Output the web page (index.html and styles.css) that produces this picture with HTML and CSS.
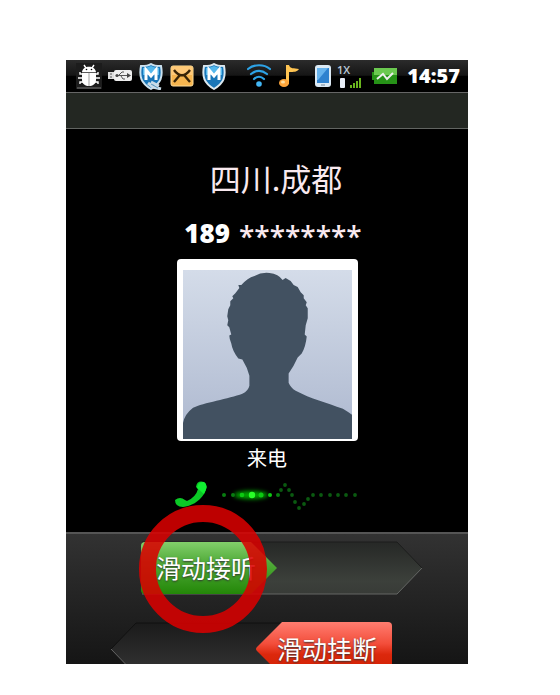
FILE: index.html
```html
<!DOCTYPE html>
<html lang="zh-CN">
<head>
<meta charset="utf-8">
<meta name="viewport" content="width=device-width, initial-scale=1">
<title>来电</title>
<link rel="stylesheet" href="styles.css">
</head>
<body>
<main class="phone">
  <header class="status">
    <svg class="icon" width="26" height="26" viewBox="0 0 26 26" aria-hidden="true">
      <path d="M0 0h26v26H0z" fill="#1c1c1c"/><path d="M1 25h24" stroke="#777"/>
      <g fill="none" stroke="#fff" stroke-width="1.4"><path d="M8 2l2 3M18 2l-2 3M7 11H4V9M7 15H2M7 19H4v2M19 11h3V9M19 15h5M19 19h3v2"/></g>
      <path d="M6 9c1-7 13-7 14 0zM6 10h14v7c0 8-14 8-14 0z" fill="#fff"/>
      <path d="M6 9.500h14M13 10v13" stroke="#777" stroke-width=".7"/><circle cx="10.500" cy="6.500" r=".8"/><circle cx="15.500" cy="6.500" r=".8"/>
    </svg>
    <svg class="icon usb" width="24" height="12" viewBox="0 0 24 12" aria-hidden="true">
      <rect y="2" width="7" height="7" fill="#ddd"/><rect x="6" width="18" height="11" rx="2" fill="#eee"/>
      <path d="M2 4h2M2 7h2M8 5.500h12M11 5l3-3h2M13 6l2 3h2" stroke="#555" fill="none"/><circle cx="9" cy="5.500" r="1.600" fill="#444"/><path d="M19 3l4 2.500-4 2.500z" fill="#444"/>
    </svg>
    <svg class="icon shield" width="24" height="27" viewBox="0 0 24 27" aria-hidden="true">
      <path d="M12 1c3 2 7 2 10 2 2 11 0 17-10 23C2 20 0 14 2 3c3 0 7 0 10-2z" fill="#1976b8" stroke="#cde2ef" stroke-width="2"/>
      <path d="M12 3c3 1 5 2 8 2v7H4V5c3 0 5-1 8-2z" fill="#55b8ed"/>
      <path d="M7 17V7l5 6 5-6v10" fill="none" stroke="#fff" stroke-width="3"/>
      <path d="M9 20l5 4 8 2M12 19l8 4" stroke="#c9dce8" stroke-width="3"/><path d="M12 21l7 4" stroke="#5d9ac1"/>
    </svg>
    <svg class="icon mail" width="24" height="22" viewBox="0 0 24 22" aria-hidden="true">
      <rect x="1" y="1" width="22" height="20" rx="2" fill="#f6b54f" stroke="#ffdd9b"/><path d="M2 2h20v8H2z" fill="#ffc978"/>
      <path d="M4 5c5 7 11 7 16 0M4 17l6-7M20 17l-6-7" fill="none" stroke="#382407" stroke-width="2.400"/>
    </svg>
    <svg class="icon shield second" width="24" height="27" viewBox="0 0 24 27" aria-hidden="true">
      <path d="M12 1c3 2 7 2 10 2 2 11 0 17-10 23C2 20 0 14 2 3c3 0 7 0 10-2z" fill="#1976b8" stroke="#dce8ef" stroke-width="2"/>
      <path d="M12 3c3 1 5 2 8 2v7H4V5c3 0 5-1 8-2z" fill="#55b8ed"/>
      <path d="M7 17V7l5 6 5-6v10" fill="none" stroke="#fff" stroke-width="3"/>
    </svg>
    <svg class="icon wifi" width="24" height="24" viewBox="0 0 24 24" aria-hidden="true">
      <g fill="none" stroke="#2da3e6" stroke-width="2.200" stroke-linecap="round"><path d="M1 5c6-5 16-5 22 0M4 10c5-4 11-4 16 0M7 15c3-3 7-3 10 0"/></g><circle cx="12" cy="20" r="2.800" fill="#42b6f5"/>
    </svg>
    <svg class="icon note" width="22" height="24" viewBox="0 0 22 24" aria-hidden="true">
      <path d="M8 1h3c1 4 5 3 10 4-2 3-5 3-10 3v12H8z" fill="#ffc553"/><ellipse cx="6" cy="19" rx="5" ry="4" fill="#ffa63b"/><ellipse cx="5" cy="18" rx="2" ry="1.500" fill="#ffe0a0"/>
    </svg>
    <svg class="icon handset" width="18" height="24" viewBox="0 0 18 24" aria-hidden="true">
      <rect x="1" y="1" width="16" height="22" rx="3" fill="#dceaf5"/><path d="M3 4h12v15H3z" fill="#2f82cf"/><path d="M3 4h11L4 16H3z" fill="#67b3ed"/><path d="M7 21h4" stroke="#789"/>
    </svg>
    <div class="network"><span>1X</span>
      <svg width="24" height="12" viewBox="0 0 24 12" aria-hidden="true"><rect x="3" y="1" width="5" height="10" rx="1" fill="#e8edf7"/><path d="M14 11V8M17 11V6M20 11V4M23 11V1" stroke="#69b51e" stroke-width="2"/></svg>
    </div>
    <svg class="icon battery" width="27" height="18" viewBox="0 0 27 18" aria-hidden="true">
      <path d="M3 1h23v16H3v-4H1V5h2z" fill="#269217"/><path d="M3 1h23v7H3z" fill="#6bc950"/><path d="M6 12l6-5 4 5 6-6" fill="none" stroke="#eee" stroke-width="2"/>
    </svg>
    <time>14:57</time>
  </header>
  <div class="titlebar"></div>
  <section class="caller">
    <h1>四川.成都</h1>
    <p class="number"><strong>189</strong><span>********</span></p>
    <div class="photo">
      <svg viewBox="0 0 168 168" role="img" aria-label="联系人头像">
        <defs><linearGradient id="sky" x2="0" y2="1"><stop stop-color="#d4dce9"/><stop offset="1" stop-color="#adb8cf"/></linearGradient></defs>
        <path d="M0 0h168v168H0z" fill="url(#sky)"/>
        <path d="M0 152Q2 143 10 137C20 132 46 128 59 123Q65 120 66 115V105Q64 97 59 89L55 88Q49 80 48 73 46 68 46 65L48 64 46 57 44 55 45 50 44 46 45 39 47 35 47 31 50 28 49 26 52 23 56 18 55 15 58 15Q64 8 71 6 78 2 86 3 95 4 99 10L102 8 107 11 110 15 114 17 117 22 120 25 120 28 123 32 122 35 124 38 124 48 122 55 121 64 123 66Q122 76 118 83L114 87Q110 96 105 103V112Q107 117 112 120C127 128 143 132 159 138Q164 141 168 144V168H0z" fill="#425161"/>
      </svg>
    </div>
    <p class="state">来电</p>
    <svg class="pulse" width="188" height="30" viewBox="0 0 188 30" aria-hidden="true">
      <defs><filter id="glow" x="-1" y="-1" width="3" height="3"><feGaussianBlur stdDeviation="2"/></filter></defs>
      <path d="M2 20q5-4 10 0l2 1q9-4 11-12l-2-2q1-7 8-5 5 3 0 12c-5 8-13 12-21 13Q2 27 2 20z" fill="#0bc926"/>
      <path d="M24 8q1-7 7-6 5 3 0 12z" fill="#11ef32"/>
      <ellipse cx="78" cy="15" rx="17" ry="4" fill="#0a0" filter="url(#glow)"/>
      <g fill="#087d10"><circle cx="51" cy="15" r="2"/><circle cx="60" cy="15" r="2"/><circle cx="105" cy="15" r="2"/></g>
      <g fill="#0cca12"><circle cx="69" cy="15" r="2.300"/><circle cx="79" cy="15" r="3.200" fill="#28ff28"/><circle cx="88" cy="15" r="2.500"/><circle cx="97" cy="15" r="2"/></g>
      <g fill="#0a5a10"><circle cx="108" cy="10" r="1.900"/><circle cx="112" cy="5" r="1.900"/><circle cx="116" cy="10" r="1.900"/><circle cx="119" cy="15" r="1.900"/><circle cx="122" cy="22" r="1.900"/><circle cx="126" cy="28" r="1.900"/><circle cx="131" cy="24" r="1.900"/><circle cx="135" cy="19" r="1.900"/><circle cx="140" cy="15" r="1.900"/><circle cx="148" cy="15" r="1.900"/><circle cx="157" cy="15" r="1.900"/><circle cx="165" cy="15" r="1.900"/><circle cx="173" cy="15" r="1.900"/><circle cx="182" cy="15" r="1.900"/></g>
    </svg>
  </section>
  <section class="actions">
    <div class="slider answer">
      <svg class="track" viewBox="0 0 282 54" aria-hidden="true">
        <defs><linearGradient id="trackUp" x2="0" y2="1"><stop stop-color="#262826"/><stop offset=".75" stop-color="#3c403b"/><stop offset="1" stop-color="#383b37"/></linearGradient></defs>
        <path d="M1 1h255l25 26-25 26H1z" fill="url(#trackUp)"/><path d="M1 53h255l25-26" fill="none" stroke="#646664"/><path d="M1 1h255l25 26" fill="none" stroke="#1c1d1c"/>
      </svg>
      <button type="button">
        <svg viewBox="0 0 136 54" aria-hidden="true"><defs><linearGradient id="green" x2="0" y2="1"><stop stop-color="#82cf6b"/><stop offset=".4" stop-color="#51ab39"/><stop offset="1" stop-color="#238708"/></linearGradient></defs><path d="M4 1h106l26 26-26 26H4q-4 0-4-4V5q0-4 4-4z" fill="url(#green)"/></svg>
        <span>滑动接听</span>
      </button>
      <svg class="ring" width="130" height="130" viewBox="0 0 130 130" aria-hidden="true"><circle cx="65" cy="65" r="55.500" fill="none" stroke="#d90000" stroke-opacity=".87" stroke-width="17"/></svg>
    </div>
    <div class="slider decline">
      <svg class="track" viewBox="0 0 282 54" aria-hidden="true">
        <defs><linearGradient id="trackDown" x2="0" y2="1"><stop stop-color="#1b1b1b"/><stop offset="1" stop-color="#353535"/></linearGradient></defs>
        <path d="M281 1H26L1 27l25 26h255z" fill="url(#trackDown)"/><path d="M1 27l25 26h255" fill="none" stroke="#666"/><path d="M281 1H26L1 27" fill="none" stroke="#101010"/>
      </svg>
      <button type="button">
        <svg viewBox="0 0 136 54" aria-hidden="true"><defs><linearGradient id="red" x2="0" y2="1"><stop stop-color="#ff7d70"/><stop offset=".4" stop-color="#f34e3b"/><stop offset=".6" stop-color="#dc280d"/><stop offset="1" stop-color="#cf1f00"/></linearGradient></defs><path d="M26 0h106q4 0 4 4v46q0 4-4 4H26L1 29q-2-2 0-4z" fill="url(#red)"/></svg>
        <span>滑动挂断</span>
      </button>
    </div>
  </section>
</main>
</body>
</html>
```
FILE: styles.css
```css
* { box-sizing: border-box; }

body {
  margin: 0;
  min-height: 100vh;
  padding: 60px 92px 31px 66px;
  display: flex;
  background: #fff;
  color: #fff;
  font-family: "Open Sans", "Noto Sans CJK SC", sans-serif;
}

h1, p { margin: 0; font-weight: 400; }
svg { display: block; }

.phone {
  flex: 1;
  min-width: 0;
  display: flex;
  flex-direction: column;
  overflow: hidden;
  background: #000;
}

.status {
  height: 32px;
  padding: 0 8px 0 10px;
  display: flex;
  align-items: center;
  background: linear-gradient(#2b2b2b, #151515 48%, #000 50%);
}

.icon { flex: none; }
.usb { margin-left: 6px; }
.shield { margin-left: 7px; }
.mail { margin-left: 7px; }
.second { margin-left: 8px; }
.wifi { margin-left: 21px; }
.note { margin-left: 7px; }
.handset { margin-left: 14px; }
.battery { margin-left: 10px; }

.network {
  margin-left: 5px;
  color: #b9c8d8;
  font-size: 11px;
  font-weight: 600;
  line-height: 14px;
}

time {
  margin-left: auto;
  font-size: 20px;
  font-weight: 800;
  line-height: 32px;
}

.titlebar {
  height: 37px;
  border-top: 1px solid #666;
  border-bottom: 1px solid #626562;
  background: #232722;
}

.caller {
  flex: 1;
  padding-top: 27px;
  display: flex;
  flex-direction: column;
  align-items: center;
}

.caller h1 {
  margin-left: 18px;
  color: #f9e9ef;
  font-family: "Noto Sans CJK SC", sans-serif;
  font-size: 31px;
  line-height: 44px;
}

.number {
  margin-top: 14px;
  margin-left: 12px;
  display: flex;
  gap: 9px;
  line-height: 38px;
}

.number strong { font-size: 26px; font-weight: 800; }
.number span { color: #f9e9ef; font-size: 28px; font-weight: 600; line-height: 44px; }

.photo {
  width: 181px;
  margin-top: 1px;
  padding: 11px 6px 2px;
  border-radius: 4px;
  background: #fff;
}

.state {
  margin-top: 3px;
  font-size: 20px;
  line-height: 30px;
}

.pulse { margin-top: 6px; }

.actions {
  height: 132px;
  padding-top: 7px;
  border-top: 2px solid #555;
  background: linear-gradient(#323232, #151515);
}

.slider {
  position: relative;
  width: 282px;
  display: grid;
}

.slider > .track, .slider > button { grid-area: 1 / 1; }
.answer { z-index: 1; margin-left: 75px; }
.decline { margin: 27px 0 0 44px; }
.decline button { justify-self: end; }

button {
  width: 136px;
  padding: 0;
  border: 0;
  display: grid;
  align-items: start;
  justify-items: center;
  background: none;
  color: #fff;
  font: 25px/52px "Noto Sans CJK SC", sans-serif;
  text-shadow: 0 1px 2px #333;
  cursor: pointer;
}

button svg, button span { grid-area: 1 / 1; }
button svg { width: 136px; }
.answer button span { padding-right: 6px; }
.decline button span { padding-left: 6px; }

.ring {
  position: absolute;
  top: -37px;
  left: -3px;
  pointer-events: none;
}
```
